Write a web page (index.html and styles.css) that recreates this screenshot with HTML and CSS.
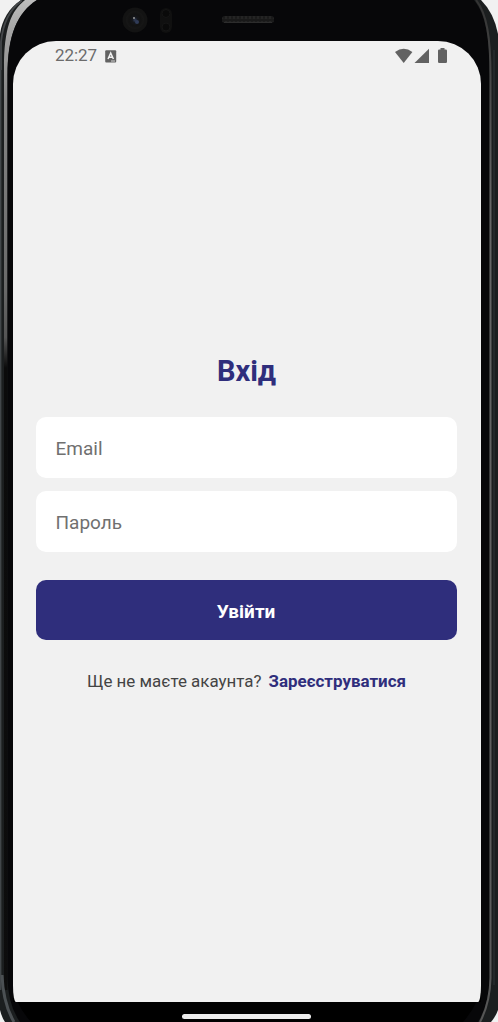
FILE: index.html
```html
<!DOCTYPE html>
<html lang="uk">
<head>
<meta charset="utf-8">
<title>Вхід</title>
<link rel="stylesheet" href="styles.css">
</head>
<body>
<div class="device">
  <svg class="frame" width="498" height="1022" viewBox="0 0 498 1022" aria-hidden="true">
    <defs>
      <linearGradient id="rimL" x1="0" y1="0" x2="0" y2="1022" gradientUnits="userSpaceOnUse">
        <stop offset="0" stop-color="#bdbdbd"/><stop offset=".03" stop-color="#a5a5a5"/><stop offset=".1" stop-color="#858585"/><stop offset=".28" stop-color="#6a6a6a"/><stop offset=".33" stop-color="#555"/><stop offset=".36" stop-color="#0b0b0b"/><stop offset="1" stop-color="#0d0d0d"/>
      </linearGradient>
      <linearGradient id="rimR" x1="0" y1="0" x2="0" y2="1022" gradientUnits="userSpaceOnUse">
        <stop offset="0" stop-color="#333"/><stop offset=".06" stop-color="#444"/><stop offset=".2" stop-color="#666"/><stop offset=".9" stop-color="#5c5c5c"/><stop offset="1" stop-color="#555"/>
      </linearGradient>
      <radialGradient id="lens"><stop offset="0" stop-color="#34405c"/><stop offset=".3" stop-color="#15171c"/><stop offset=".65" stop-color="#121212"/><stop offset="1" stop-color="#171717"/></radialGradient>
      <pattern id="mesh" width="4" height="5" patternUnits="userSpaceOnUse"><path d="M0 0h4v5H0z" fill="#191919"/><path d="M1 1l2 3M3 1L1 4" stroke="#292929" stroke-width=".8"/></pattern>
    </defs>
    <path d="M21 0C9 8 2 20 0 34V1010Q2 1018 5 1022H491Q496 1016 498 1010V34Q494 13 481 0Z" fill="#1b1e1f"/>
    <path d="M.7 70V990" stroke="#42474a" stroke-width="1.4"/>
    <path d="M22 .5C10 9 3 22 1 42V70" fill="none" stroke="#44474a" stroke-width="1.8"/>
    <path d="M25 0C11 11 4 28 4 68V990H7.500V76C7.500 34 17 14 37 0Z" fill="url(#rimL)"/>
    <path d="M2 975Q3 1003 14 1022" fill="none" stroke="#4b5053" stroke-width="3"/>
    <path d="M37 0C18 12 7.500 34 7.500 76V978Q8 1005 20 1022H478Q489 1004 489.500 978V76C489.500 38 486 15 474 0Z" fill="#070709"/>
    <path d="M476 0C487 14 490.500 38 490.500 76V978Q490 1003 480 1022" fill="none" stroke="url(#rimR)" stroke-width="2"/>
    <path d="M494 50V985" stroke="#24282a" stroke-width="2"/>
    <path d="M13 985V1002H481V985Q479 1004 463 1022H31Q15 1004 13 985" fill="#000"/>
    <circle cx="135" cy="20" r="12.5" fill="#131313"/>
    <circle cx="135" cy="20" r="9" fill="url(#lens)"/>
    <circle cx="134" cy="18" r="1" fill="#999"/><circle cx="137" cy="22" r="2" fill="#303b58"/>
    <rect x="160" y="8" width="12" height="25" rx="6" fill="#101010"/>
    <circle cx="166" cy="13.500" r="4" fill="#0a0a0a" stroke="#151515"/><circle cx="166" cy="27" r="4" fill="#0a0a0a" stroke="#151515"/>
    <rect x="222" y="16" width="52" height="7" rx="3" fill="url(#mesh)"/>
    <path d="M224 22.500H272" stroke="#2d2d2d"/>
  </svg>
  <div class="screen">
    <header class="status">
      <span class="clock">22:27</span>
      <svg class="keyboard" width="12" height="13" viewBox="0 0 12 13"><rect x=".2" y=".3" width="11" height="12.200" rx="1" fill="#626262"/><path d="M3 9L5.700 3L8.400 9M4 7.300h3.500" fill="none" stroke="#f1f1f1" stroke-width="1.500"/><path d="M6 11h4" stroke="#f1f1f1" stroke-width=".8"/></svg>
      <svg class="signals" width="53" height="16" viewBox="0 0 53 16" fill="#626262"><path d="M0 4Q8.700-2.500 17.400 4L8.700 15Z"/><path d="M34 .700V15H19.500Z"/><path d="M45.500 0h4v1.500h1.300q1.200 0 1.200 1.200V13.800q0 1.200-1.200 1.200h-6.600q-1.200 0-1.200-1.200V2.700q0-1.200 1.200-1.200h1.300z"/></svg>
    </header>
    <main class="login">
      <h1 class="title">Вхід</h1>
      <input class="field" type="email" placeholder="Email">
      <input class="field" type="password" placeholder="Пароль">
      <button class="submit">Увійти</button>
      <p class="signup"><span>Ще не маєте акаунта?</span><a class="link">Зареєструватися</a></p>
    </main>
  </div>
  <div class="navbar"><span class="handle"></span></div>
</div>
</body>
</html>
```
FILE: styles.css
```css
* { box-sizing: border-box; }
body { margin: 0; background: #f1f1f1; font-family: Roboto, sans-serif; }
.device { position: relative; width: 498px; height: 1022px; padding: 41px 17px 0 13px; overflow: hidden; }
.frame { position: absolute; inset: 0; }
.screen { position: relative; height: 961px; background: #f1f1f1; border-radius: 43px 43px 3px 3px / 43px 43px 16px 16px; }
.status { display: flex; align-items: center; height: 28px; padding: 0 33px 0 42px; color: #6b6b6b; }
.clock { font-size: 17px; line-height: 20px; letter-spacing: -.1px; }
.keyboard { margin-left: 8px; margin-top: 2px; }
.signals { margin-left: auto; margin-top: 2px; }
.login { display: flex; flex-direction: column; padding: 282px 24px 0 23px; }
.title { margin: 0; height: 41px; line-height: 41px; font-size: 29px; font-weight: 700; text-align: center; letter-spacing: -.1px; color: #2f2e7c; }
.field { display: block; width: 100%; height: 61px; margin-top: 25px; padding: 2px 19.5px 0; border: 0; border-radius: 10px; background: #fff; font: 19px Roboto, sans-serif; }
.field + .field { margin-top: 13px; }
.field::placeholder { color: #707070; opacity: 1; }
.submit { height: 60px; margin-top: 28px; padding: 2px 1px 0 0; border: 0; border-radius: 10px; background: #2f2e7c; color: #fff; font: 700 19px Roboto, sans-serif; }
.signup { display: flex; justify-content: center; gap: 7px; margin: 30px 0 0; font-size: 16.95px; line-height: 22px; color: #444; white-space: nowrap; }
.link { color: #2f2e7c; font-weight: 700; }
.navbar { position: relative; display: flex; justify-content: center; height: 20px; padding: 12px 1px 0 0; }
.handle { width: 129px; height: 5px; border-radius: 3px; background: #ececec; }
```
